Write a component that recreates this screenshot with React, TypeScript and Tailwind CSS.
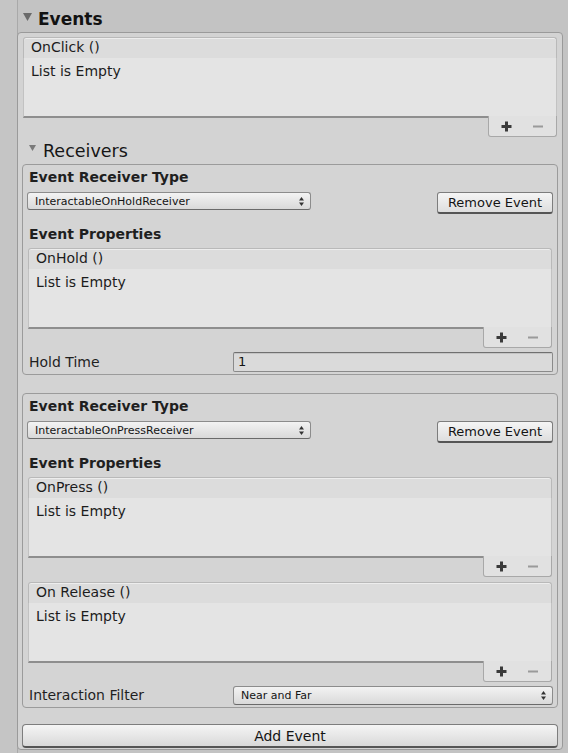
import React from "react";

function Tri({ w, h, color }: { w: number; h: number; color: string }) {
  return (
    <svg width={w} height={h} viewBox={`0 0 ${w} ${h}`} className="block">
      <polygon points={`0,0 ${w},0 ${w / 2},${h}`} fill={color} />
    </svg>
  );
}

function UpDown() {
  return (
    <svg width="5" height="9" viewBox="0 0 5 9" className="block">
      <polygon points="0,3.5 5,3.5 2.5,0" fill="#333" />
      <polygon points="0,5.5 5,5.5 2.5,9" fill="#333" />
    </svg>
  );
}

function Footer() {
  return (
    <div className="flex justify-end">
      <div className="relative z-10 -mt-[2px] flex h-[21px] w-[69px] items-center rounded-b-[3px] border-x border-b border-[#a8a8a8] bg-[#e1e1e1]">
        <svg width="11" height="11" viewBox="0 0 11 11" className="ml-[12px] block">
          <rect x="4" y="0.5" width="3" height="10" fill="#3a3a3a" />
          <rect x="0.5" y="4" width="10" height="3" fill="#3a3a3a" />
        </svg>
        <svg width="11" height="3" viewBox="0 0 11 3" className="ml-[21px] block">
          <rect x="0" y="0.5" width="10" height="2" fill="#9a9a9a" />
        </svg>
      </div>
    </div>
  );
}

function RList({ title, className = "" }: { title: string; className?: string }) {
  return (
    <div className={`flex flex-col ${className}`}>
      <div className="h-[21px] rounded-t-[3px] border-x border-t border-[#b9b9b9] bg-[#dcdcdc] pl-[7px] text-[14px] leading-[19px] text-[#1c1c1c] shadow-[inset_0_1px_0_#ededed]">
        {title}
      </div>
      <div className="h-[60px] border-x border-b-2 border-x-[#c2c2c2] border-b-[#8e8e8e] bg-[#e4e4e4] pl-[7px] pt-[5px] text-[14px] leading-[16px] text-[#1c1c1c]">
        List is Empty
      </div>
      <Footer />
    </div>
  );
}

function Dropdown({ text, className = "" }: { text: string; className?: string }) {
  return (
    <div
      className={`flex items-center justify-between rounded-[3px] border border-[#8c8c8c] border-b-[#6a6a6a] bg-gradient-to-b from-[#f3f3f3] to-[#d9d9d9] pl-[7px] pr-[6px] text-[11px] leading-[13px] text-[#141414] ${className}`}
    >
      <span>{text}</span>
      <UpDown />
    </div>
  );
}

function RemoveBtn() {
  return (
    <div className="-mr-px flex h-[22px] w-[116px] items-center justify-center rounded-[3px] border border-[#7d7d7d] border-b-2 border-b-[#555] bg-gradient-to-b from-[#f5f5f5] to-[#dedede] text-[13px] leading-[16px] text-[#141414]">
      Remove Event
    </div>
  );
}

function Label({ children, bold = false, className = "" }: { children: React.ReactNode; bold?: boolean; className?: string }) {
  return (
    <div className={`ml-px h-[16px] text-[14px] leading-[16px] text-[#1f1f1f] ${bold ? "font-bold" : ""} ${className}`}>
      {children}
    </div>
  );
}

export default function App() {
  return (
    <div className="flex h-[753px] w-[568px] overflow-hidden bg-[#c3c3c3] font-['DejaVu_Sans',sans-serif]">
      <div className="h-full w-[18px] shrink-0 border-r border-[#a9a9a9] bg-[#c5c5c5]" />
      <div className="flex w-[550px] flex-col">
        <div className="flex h-[32px] items-start">
          <div className="ml-[5px] mt-[13px]">
            <Tri w={9} h={8} color="#6a6a6a" />
          </div>
          <div className="ml-[6px] mt-[9px] text-[17px] font-bold leading-[20px] text-[#121212]">Events</div>
        </div>
        <div className="-ml-px mr-[5px] flex flex-col rounded-[4px] border border-[#9a9a9a] bg-[#d3d3d3] px-[4px] pb-[1px] pt-[4px]">
          <RList title="OnClick ()" className="mx-px" />
          <div className="mt-[4px] flex h-[20px] items-start">
            <div className="ml-[7px] mt-[4px]">
              <Tri w={7} h={6} color="#7a7a7a" />
            </div>
            <div className="ml-[7px] text-[17.5px] leading-[20px] text-[#161616]">Receivers</div>
          </div>

          <div className="mt-[3px] flex flex-col rounded-[4px] border border-[#9b9b9b] bg-[#d4d4d4] px-[5px] pb-[2px] pt-[4px]">
            <Label bold>Event Receiver Type</Label>
            <div className="mt-[7px] flex h-[22px] items-start justify-between">
              <Dropdown text="InteractableOnHoldReceiver" className="-ml-px h-[18px] w-[284px]" />
              <RemoveBtn />
            </div>
            <Label bold className="mt-[12px]">Event Properties</Label>
            <RList title="OnHold ()" className="mt-[6px]" />
            <div className="mt-[4px] flex h-[20px] items-center justify-between">
              <Label>Hold Time</Label>
              <div className="-mr-px flex h-[20px] w-[320px] items-center rounded-[2px] border border-[#8a8a8a] border-t-[#707070] bg-[#dadada] pl-[4px] text-[13px] leading-[16px] text-[#141414] shadow-[inset_0_1px_0_#c4c4c4]">
                1
              </div>
            </div>
          </div>

          <div className="mt-[18px] flex flex-col rounded-[4px] border border-[#9b9b9b] bg-[#d4d4d4] px-[5px] pb-[2px] pt-[4px]">
            <Label bold>Event Receiver Type</Label>
            <div className="mt-[7px] flex h-[22px] items-start justify-between">
              <Dropdown text="InteractableOnPressReceiver" className="-ml-px h-[18px] w-[284px]" />
              <RemoveBtn />
            </div>
            <Label bold className="mt-[12px]">Event Properties</Label>
            <RList title="OnPress ()" className="mt-[6px]" />
            <RList title="On Release ()" className="mt-[5px]" />
            <div className="mt-[3px] flex h-[20px] items-center justify-between">
              <Label>Interaction Filter</Label>
              <Dropdown text="Near and Far" className="-mr-px h-[19px] w-[320px]" />
            </div>
          </div>

          <div className="mt-[16px] flex h-[24px] items-center justify-center rounded-[4px] border border-[#7d7d7d] border-b-2 border-b-[#555] bg-gradient-to-b from-[#f5f5f5] to-[#d9d9d9] text-[14px] leading-[16px] text-[#141414]">
            Add Event
          </div>
        </div>
      </div>
    </div>
  );
}
